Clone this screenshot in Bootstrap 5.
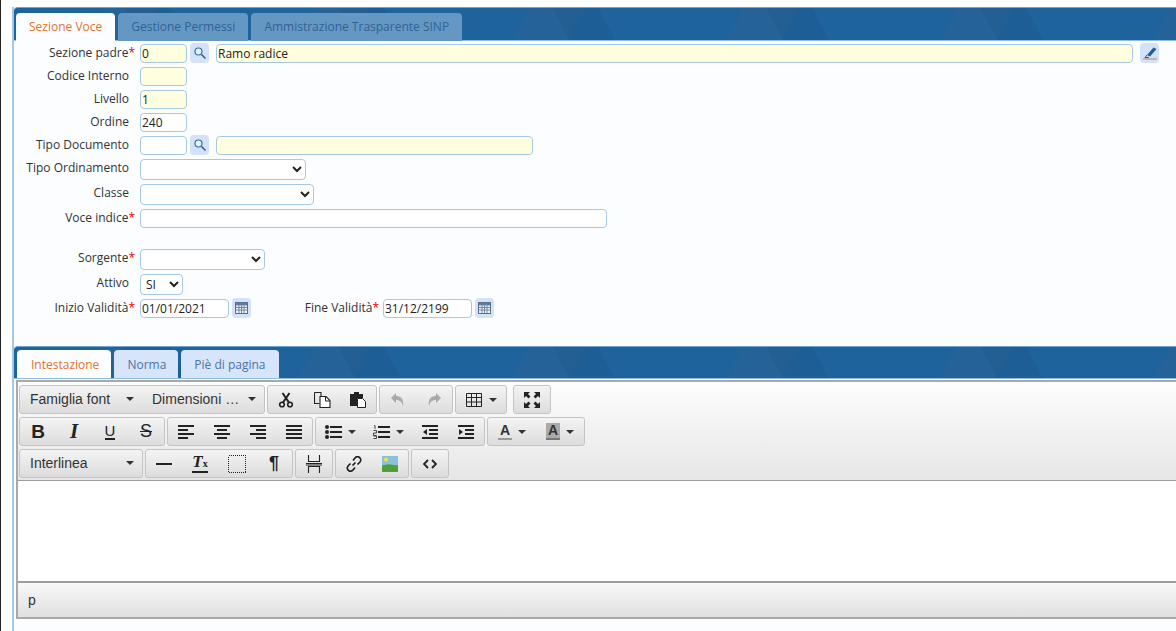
<!DOCTYPE html>
<html lang="it">
<head>
    <meta charset="UTF-8">
    <title>Sezione Voce</title>
    <link href="https://cdn.jsdelivr.net/npm/bootstrap@5.3.0/dist/css/bootstrap.min.css" rel="stylesheet">
    <style>
        html, body { height: 631px; overflow: hidden; }
        body {
            background: #fff;
            font-family: "Open Sans", "Liberation Sans", sans-serif;
            font-size: 12px;
            color: #333;
        }
        .page-frame { height: 631px; border-left: 1px solid #222; padding: 7px 0 0 11px; }
        .main-panel { height: 624px; background: #fbfdfe; border-left: 2px solid #a5c9e4; }

        .tab-band {
            height: 34px;
            padding: 5px 0 0 2px;
            background-color: #1f639c;
            background-image:
                linear-gradient(118deg, transparent 38%, rgba(70, 95, 125, .14) 38%, rgba(70, 95, 125, .14) 62%, transparent 62%),
                linear-gradient(62deg, transparent 55%, rgba(20, 60, 110, .12) 55%, rgba(20, 60, 110, .12) 75%, transparent 75%);
            background-size: 214px 100%, 214px 100%;
            border-top: 1px solid #6fa3cf;
            border-bottom: 1px solid #8fbde0;
            border-radius: 4px 0 0 0;
            display: flex;
            gap: 3px;
        }
        .tab-lower { height: 33px; padding: 3px 0 0 3px; }
        .band-tab {
            height: 28px;
            line-height: 27px;
            padding: 0 13px;
            border-radius: 4px 4px 0 0;
            font-size: 12px;
            background: #6597c3;
            color: #2f6496;
        }
        .band-tab.is-active { background: #fbfdfe; color: #e8702a; }
        .tab-lower .band-tab { background: #d6e5f9; color: #4d73a8; line-height: 29px; }
        .tab-lower .band-tab.is-active { background: #fbfdfe; color: #e8702a; }

        .form-area { height: 305px; padding-top: 3px; }
        .f-row { height: 23px; display: flex; align-items: flex-start; }
        .f-label { width: 121px; flex: none; text-align: right; padding-right: 6px; line-height: 18px; white-space: nowrap; }
        .f-label.req { padding-right: 0; }
        .req-mark { color: #e00; }
        .f-input {
            height: 19px;
            border: 1px solid #a5c9e4;
            border-radius: 4px;
            background: #fff;
            font: 12px/17px "Open Sans", "Liberation Sans", sans-serif;
            color: #222;
            padding: 0 1px;
            margin-left: 5px;
            outline: none;
        }
        .f-yellow { background: #ffffe0; }
        .f-select {
            height: 21px;
            border: 1px solid #a5c9e4;
            border-radius: 4px;
            background: #fff;
            font: 12px "Open Sans", "Liberation Sans", sans-serif;
            color: #222;
            margin-left: 5px;
            padding: 0 0 0 1px;
        }
        .w-47 { width: 47px; }
        .w-89 { width: 89px; }
        .gap-row { height: 40px; }
        .tall-row { height: 25px; }
        .after-icon { margin-left: 7px; }
        .icon-btn {
            width: 19px;
            height: 20px;
            margin-left: 3px;
            margin-top: -1px;
            border-radius: 4px;
            background: #d3e2f6;
            display: flex;
            align-items: center;
            justify-content: center;
            flex: none;
        }
        .edit-btn { margin-left: 7px; margin-right: 17px; }
        .fine-label { width: 128px; }

        .editor-box { margin: 1px 0 0 2px; border: 2px solid #a9a9a9; border-right: 0; height: 239px; display: flex; flex-direction: column; background: #fff; }
        .mce-bar {
            height: 99px;
            background: linear-gradient(#fdfdfd, #e6e6e6);
            border-bottom: 1px solid #9e9e9e;
            padding: 3px 0 0 1px;
            display: flex;
            flex-direction: column;
            gap: 3px;
        }
        .mce-row { display: flex; gap: 2px; height: 29px; }
        .mce-group {
            display: flex;
            height: 29px;
            border: 1px solid #c4c4c4;
            border-radius: 3px;
            background: linear-gradient(#f4f4f4, #dcdcdc);
        }
        .mce-spaced { margin-left: 4px; }
        .mce-btn {
            width: 36px;
            display: flex;
            align-items: center;
            justify-content: center;
            gap: 7px;
            color: #333;
        }
        .mce-btn svg { flex: none; }
        .mce-w48 { width: 48px; gap: 6px; }
        .mce-w50 { width: 50px; }
        .mce-w38 { width: 38px; }
        .mce-list { font: 14px "Liberation Sans", sans-serif; color: #333; justify-content: space-between; padding: 0 8px 1px 10px; width: 122px; }
        .caret-down { width: 0; height: 0; border-left: 4px solid transparent; border-right: 4px solid transparent; border-top: 4px solid #333; flex: none; }
        .g-bold { font: bold 19px "Liberation Sans", sans-serif; color: #222; }
        .g-italic { font: italic bold 21px "Liberation Serif", serif; color: #222; }
        .g-under { font: 15px "Liberation Sans", sans-serif; color: #222; border-bottom: 2px solid #222; line-height: 14px; }
        .g-strike { font: 18px "Liberation Sans", sans-serif; color: #222; text-decoration: line-through; }
        .g-color { font: bold 14px "Liberation Sans", sans-serif; color: #333; border-bottom: 2px solid #999; line-height: 15px; padding: 0 2px; }
        .g-back { background: #aaa; border-bottom-color: #777; }
        .g-clear { font: italic bold 17px "Liberation Serif", serif; color: #222; border-bottom: 2px solid #222; line-height: 15px; }
        .g-clear-x { font-size: 10px; font-style: normal; }
        .g-pilcrow { font: bold 18px "Liberation Sans", sans-serif; color: #222; }
        .mce-area { height: 100px; background: #fff; }
        .mce-status {
            height: 36px;
            border-top: 2px solid #9e9e9e;
            background: linear-gradient(#f8f8f8, #e0e0e0);
            padding: 9px 0 0 10px;
            font: 14px "Liberation Sans", sans-serif;
            color: #333;
        }
    </style>
</head>
<body>
<div class="page-frame">
    <div class="main-panel">
        <div class="tab-band">
            <div class="band-tab is-active">Sezione Voce</div>
            <div class="band-tab">Gestione Permessi</div>
            <div class="band-tab">Ammistrazione Trasparente SINP</div>
        </div>

        <div class="form-area">
            <div class="f-row">
                <div class="f-label req">Sezione padre<span class="req-mark">*</span></div>
                <input class="f-input f-yellow w-47" value="0">
                <div class="icon-btn"><svg width="14" height="14" viewBox="0 0 14 14"><circle cx="5.500" cy="5.500" r="3.500" fill="#eaf2fb" stroke="#2f6ea8" stroke-width="1.200"/><path d="M8.500 8.500 12.500 12.500" stroke="#2f5f90" stroke-width="1.600"/></svg></div>
                <input class="f-input f-yellow flex-grow-1 after-icon" value="Ramo radice">
                <div class="icon-btn edit-btn"><svg width="16" height="14" viewBox="0 0 16 14"><path d="M5 9 11.500 1.500l3 1.500L8 10.500z" fill="#1f5e96"/><path d="M5 9 3 11.500h4" fill="none" stroke="#1f5e96"/><path d="M1 13h14" stroke="#c9825a"/></svg></div>
            </div>
            <div class="f-row">
                <div class="f-label">Codice Interno</div>
                <input class="f-input f-yellow w-47">
            </div>
            <div class="f-row">
                <div class="f-label">Livello</div>
                <input class="f-input f-yellow w-47" value="1">
            </div>
            <div class="f-row">
                <div class="f-label">Ordine</div>
                <input class="f-input w-47" value="240">
            </div>
            <div class="f-row">
                <div class="f-label">Tipo Documento</div>
                <input class="f-input w-47">
                <div class="icon-btn"><svg width="14" height="14" viewBox="0 0 14 14"><circle cx="5.500" cy="5.500" r="3.500" fill="#eaf2fb" stroke="#2f6ea8" stroke-width="1.200"/><path d="M8.500 8.500 12.500 12.500" stroke="#2f5f90" stroke-width="1.600"/></svg></div>
                <input class="f-input f-yellow after-icon" style="width:317px">
            </div>
            <div class="f-row tall-row">
                <div class="f-label">Tipo Ordinamento</div>
                <select class="f-select" style="width:166px"><option></option></select>
            </div>
            <div class="f-row tall-row">
                <div class="f-label">Classe</div>
                <select class="f-select" style="width:174px"><option></option></select>
            </div>
            <div class="f-row gap-row">
                <div class="f-label req">Voce indice<span class="req-mark">*</span></div>
                <input class="f-input" style="width:467px">
            </div>
            <div class="f-row tall-row">
                <div class="f-label req">Sorgente<span class="req-mark">*</span></div>
                <select class="f-select" style="width:125px"><option></option></select>
            </div>
            <div class="f-row tall-row">
                <div class="f-label">Attivo</div>
                <select class="f-select" style="width:43px"><option>SI</option></select>
            </div>
            <div class="f-row">
                <div class="f-label req">Inizio Validità<span class="req-mark">*</span></div>
                <input class="f-input w-89" value="01/01/2021">
                <div class="icon-btn"><svg width="13" height="12" viewBox="0 0 13 12"><rect x=".5" y=".5" width="12" height="11" fill="#eef3fa" stroke="#55718f"/><rect x="1" y="1" width="11" height="2.500" fill="#5f7ea0"/><path d="M1 5.500h11M1 8h11M4 3.500v8M6.500 3.500v8M9 3.500v8" stroke="#55718f" stroke-width=".8"/></svg></div>
                <div class="f-label req fine-label">Fine Validità<span class="req-mark">*</span></div>
                <input class="f-input w-89" style="margin-left:4px" value="31/12/2199">
                <div class="icon-btn"><svg width="13" height="12" viewBox="0 0 13 12"><rect x=".5" y=".5" width="12" height="11" fill="#eef3fa" stroke="#55718f"/><rect x="1" y="1" width="11" height="2.500" fill="#5f7ea0"/><path d="M1 5.500h11M1 8h11M4 3.500v8M6.500 3.500v8M9 3.500v8" stroke="#55718f" stroke-width=".8"/></svg></div>
            </div>
        </div>

        <div class="tab-band tab-lower">
            <div class="band-tab is-active" style="padding:0 12px 0 14px">Intestazione</div>
            <div class="band-tab" style="padding-right:12px">Norma</div>
            <div class="band-tab">Piè di pagina</div>
        </div>

        <div class="editor-box">
            <div class="mce-bar">
                <div class="mce-row">
                    <div class="mce-group">
                        <div class="mce-btn mce-list">Famiglia font<span class="caret-down"></span></div>
                        <div class="mce-btn mce-list">Dimensioni …<span class="caret-down"></span></div>
                    </div>
                    <div class="mce-group">
                        <div class="mce-btn"><svg width="16" height="16" viewBox="0 0 16 16"><circle cx="4" cy="12.500" r="2.300" fill="none" stroke="#222" stroke-width="1.600"/><circle cx="12" cy="12.500" r="2.300" fill="none" stroke="#222" stroke-width="1.600"/><path d="M5 10.500 11.500 1M11 10.500 4.500 1" stroke="#222" stroke-width="2"/></svg></div>
                        <div class="mce-btn"><svg width="17" height="16" viewBox="0 0 17 16"><path d="M.5.500h6.500v4M.5.500v11h5" fill="none" stroke="#222" stroke-width="1.100"/><path d="M6 4.500h6l4 4v7H6z" fill="#fff" stroke="#222" stroke-width="1.100"/><path d="M11.500 4.500v4.500h4.500" fill="none" stroke="#222"/></svg></div>
                        <div class="mce-btn"><svg width="16" height="17" viewBox="0 0 16 17"><path d="M0 3h4V1h5v2h4v4H7v8H0z" fill="#222"/><path d="M7.500 7.500h5l3 3v6h-8z" fill="#fff" stroke="#222"/></svg></div>
                    </div>
                    <div class="mce-group">
                        <div class="mce-btn"><svg width="16" height="16" viewBox="0 0 16 16"><path d="M1 6 6 1v3c5 0 8 3 7 10-1-4-3-6-7-6v3z" fill="#aaa"/></svg></div>
                        <div class="mce-btn"><svg width="16" height="16" viewBox="0 0 16 16"><path d="M15 6 10 1v3C5 4 2 7 3 14c1-4 3-6 7-6v3z" fill="#aaa"/></svg></div>
                    </div>
                    <div class="mce-group">
                        <div class="mce-btn mce-w50"><svg width="16" height="16" viewBox="0 0 16 16"><path d="M.5 1.500h15v13H.5zM.5 5.500h15M.5 10h15M5.500 1.500v13M10.500 1.500v13" fill="none" stroke="#222"/></svg><span class="caret-down"></span></div>
                    </div>
                    <div class="mce-group mce-spaced">
                        <div class="mce-btn"><svg width="16" height="16" viewBox="0 0 16 16"><path d="M0 0h6L4 2l2.500 2.500-2 2L2 4 0 6zM16 0v6l-2-2-2.500 2.500-2-2L12 2l-2-2zM0 16v-6l2 2 2.500-2.500 2 2L4 14l2 2zM16 16h-6l2-2-2.500-2.500 2-2L14 12l2-2z" fill="#222"/></svg></div>
                    </div>
                </div>
                <div class="mce-row">
                    <div class="mce-group">
                        <div class="mce-btn"><span class="g-bold">B</span></div>
                        <div class="mce-btn"><span class="g-italic">I</span></div>
                        <div class="mce-btn"><span class="g-under">U</span></div>
                        <div class="mce-btn"><span class="g-strike">S</span></div>
                    </div>
                    <div class="mce-group">
                        <div class="mce-btn"><svg width="16" height="14" viewBox="0 0 16 14"><path d="M0 1h16M0 5h10M0 9h16M0 13h10" stroke="#222" stroke-width="2"/></svg></div>
                        <div class="mce-btn"><svg width="16" height="14" viewBox="0 0 16 14"><path d="M0 1h16M3 5h10M0 9h16M3 13h10" stroke="#222" stroke-width="2"/></svg></div>
                        <div class="mce-btn"><svg width="16" height="14" viewBox="0 0 16 14"><path d="M0 1h16M6 5h10M0 9h16M6 13h10" stroke="#222" stroke-width="2"/></svg></div>
                        <div class="mce-btn"><svg width="16" height="14" viewBox="0 0 16 14"><path d="M0 1h16M0 5h16M0 9h16M0 13h16" stroke="#222" stroke-width="2"/></svg></div>
                    </div>
                    <div class="mce-group">
                        <div class="mce-btn mce-w48"><svg width="17" height="14" viewBox="0 0 17 14"><circle cx="2" cy="2" r="2" fill="#222"/><circle cx="2" cy="7" r="2" fill="#222"/><circle cx="2" cy="12" r="2" fill="#222"/><path d="M5 2h12M5 7h12M5 12h12" stroke="#222" stroke-width="2"/></svg><span class="caret-down"></span></div>
                        <div class="mce-btn mce-w48"><svg width="17" height="14" viewBox="0 0 17 14"><path d="M1 1l1-.5V4M.5 5.500h3v2.500h-3V10.500h3M.5 11h3v2.500h-3" fill="none" stroke="#222" stroke-width=".8"/><path d="M5 2h12M5 7h12M5 12h12" stroke="#222" stroke-width="2"/></svg><span class="caret-down"></span></div>
                        <div class="mce-btn"><svg width="16" height="14" viewBox="0 0 16 14"><path d="M0 1h16M7 5h9M7 9h9M0 13h16" stroke="#222" stroke-width="2"/><path d="M5 4v6L1 7z" fill="#222"/></svg></div>
                        <div class="mce-btn"><svg width="16" height="14" viewBox="0 0 16 14"><path d="M0 1h16M7 5h9M7 9h9M0 13h16" stroke="#222" stroke-width="2"/><path d="M1 4v6l4-3z" fill="#222"/></svg></div>
                    </div>
                    <div class="mce-group">
                        <div class="mce-btn mce-w48"><span class="g-color">A</span><span class="caret-down"></span></div>
                        <div class="mce-btn mce-w48"><span class="g-color g-back">A</span><span class="caret-down"></span></div>
                    </div>
                </div>
                <div class="mce-row">
                    <div class="mce-group">
                        <div class="mce-btn mce-list">Interlinea<span class="caret-down"></span></div>
                    </div>
                    <div class="mce-group">
                        <div class="mce-btn"><svg width="16" height="4" viewBox="0 0 16 4"><path d="M0 2h16" stroke="#222" stroke-width="2"/></svg></div>
                        <div class="mce-btn"><span class="g-clear">T<span class="g-clear-x">x</span></span></div>
                        <div class="mce-btn mce-w38"><svg width="18" height="18" viewBox="0 0 18 18" shape-rendering="crispEdges"><rect x=".5" y=".5" width="17" height="17" fill="none" stroke="#222" stroke-dasharray="1 1"/></svg></div>
                        <div class="mce-btn"><span class="g-pilcrow">¶</span></div>
                    </div>
                    <div class="mce-group">
                        <div class="mce-btn"><svg width="16" height="18" viewBox="0 0 16 18"><path d="M2.500 0v6.500h11V0M2.500 18v-6.500h11V18M0 8.500h16M0 10h16" fill="none" stroke="#222" stroke-width="1.100"/></svg></div>
                    </div>
                    <div class="mce-group">
                        <div class="mce-btn"><svg width="16" height="16" viewBox="0 0 16 16"><path d="M6.500 9.500 9.500 6.500M7 4.500l2-2.500a3 3 0 0 1 5 4l-2.500 2.500M9 11.500 7 14a3 3 0 0 1-5-4l2.500-2.500" fill="none" stroke="#222" stroke-width="1.700"/></svg></div>
                        <div class="mce-btn"><svg width="16" height="16" viewBox="0 0 16 16"><rect width="16" height="16" fill="#8dc0dc"/><rect y="9" width="16" height="7" fill="#5aae3c"/><circle cx="4" cy="3.500" r="2" fill="#f6e43a"/><path d="M0 10q8-4 16 1v5H0z" fill="#4f9f3a"/></svg></div>
                    </div>
                    <div class="mce-group">
                        <div class="mce-btn"><svg width="14" height="10" viewBox="0 0 14 10"><path d="M5 1 1 5l4 4M9 1l4 4-4 4" fill="none" stroke="#222" stroke-width="1.800"/></svg></div>
                    </div>
                </div>
            </div>
            <div class="mce-area"></div>
            <div class="mce-status">p</div>
        </div>
    </div>
</div>
<script src="https://cdn.jsdelivr.net/npm/bootstrap@5.3.0/dist/js/bootstrap.bundle.min.js"></script>
</body>
</html>
